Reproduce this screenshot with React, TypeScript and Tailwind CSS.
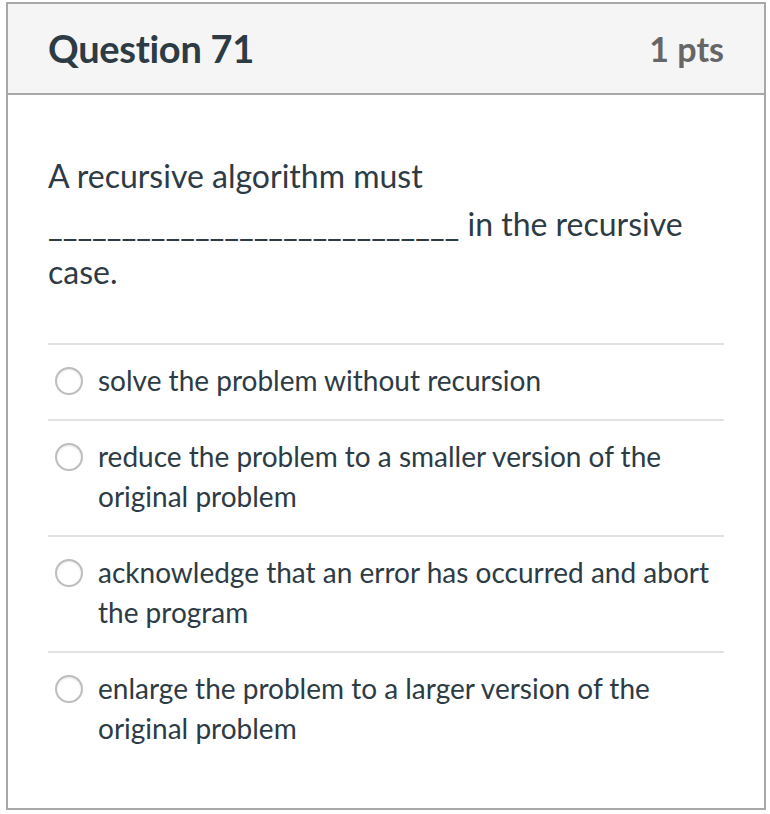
import { useState } from 'react';

const answers = [
  'solve the problem without recursion',
  'reduce the problem to a smaller version of the original problem',
  'acknowledge that an error has occurred and abort the program',
  'enlarge the problem to a larger version of the original problem',
];

export default function App() {
  const [picked, setPicked] = useState<number | null>(null);

  return (
    <div className="w-[770px] h-[814px] bg-white pt-[2px] pl-[6px]" style={{ fontFamily: 'Lato, "Noto Sans", sans-serif' }}>
      <div className="w-[760px] h-[808px] border-2 border-[#a8a8a8] flex flex-col">
        {/* Header */}
        <div className="h-[91px] bg-[#f5f5f5] border-b-2 border-[#a8a8a8] flex items-center justify-between pl-[40px] pr-[40px]">
          <h2 className="text-[38px] font-bold text-[#2d3b45] tracking-[-0.3px]">Question 71</h2>
          <span className="text-[34px] font-bold text-[#666666]">1 pts</span>
        </div>

        {/* Body */}
        <div className="pl-[40px] pr-[40px] pt-[57px]">
          <p className="text-[32px] leading-[48px] text-[#2d3b45] w-[640px]">
            A recursive algorithm must ____________________________ in the recursive case.
          </p>

          <div className="mt-[47px] border-t-2 border-[#e2e2e2]">
            {answers.map((a, i) => (
              <label
                key={i}
                className="flex items-start gap-[15px] pt-[15px] pb-[19px] pl-[7px] border-b-2 border-[#e2e2e2] cursor-pointer last:border-b-0"
                onClick={() => setPicked(i)}
              >
                <span className="mt-[7px] w-[28px] h-[28px] shrink-0 rounded-full border-2 border-[#bdbdbd] bg-white flex items-center justify-center shadow-[inset_0_1px_2px_rgba(0,0,0,0.1)]">
                  {picked === i && <span className="w-[12px] h-[12px] rounded-full bg-[#2d3b45]" />}
                </span>
                <span className="text-[28px] leading-[40px] text-[#2d3b45]">{a}</span>
              </label>
            ))}
          </div>
        </div>
      </div>
    </div>
  );
}
